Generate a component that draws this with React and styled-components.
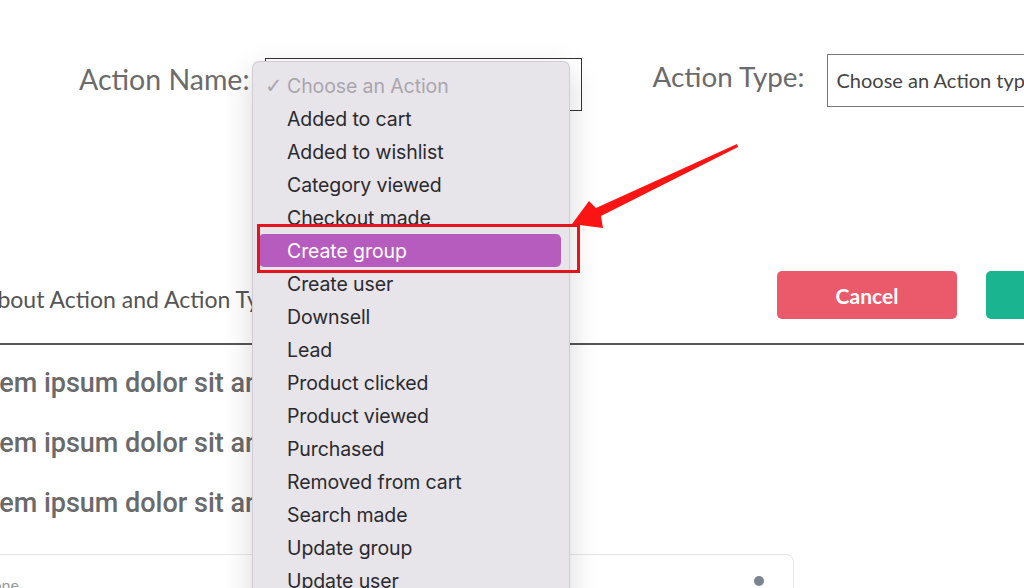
import React from 'react';
import styled, { createGlobalStyle } from 'styled-components';

const Global = createGlobalStyle`
  html, body { margin: 0; padding: 0; background: #fff; overflow: hidden; }
  #root { width: 1024px; height: 588px; }
  * { box-sizing: border-box; }
`;

const Page = styled.div`
  position: relative;
  width: 1024px;
  height: 588px;
  overflow: hidden;
  background: #fff;
  font-family: Lato, "Open Sans", sans-serif;
`;

const TopRow = styled.div`
  display: flex;
  align-items: flex-start;
  gap: 71px;
  padding: 54px 0 0 79px;
  width: 1400px;
`;

const Field = styled.div`
  display: flex;
  align-items: flex-start;
  gap: ${p => p.$gap}px;
  margin-top: ${p => p.$top || 0}px;
`;

const FieldLabel = styled.label`
  font-size: ${p => p.$size}px;
  color: #6b6b6b;
  line-height: ${p => p.$lh}px;
  white-space: nowrap;
`;

const SelectBox = styled.div`
  width: ${p => p.$w}px;
  height: 53px;
  border: 1px solid ${p => p.$border};
  background: #fff;
  padding-left: 8px;
  font-size: 20px;
  line-height: 51px;
  color: #444;
  white-space: nowrap;
  overflow: hidden;
`;

const ActionRow = styled.div`
  display: flex;
  align-items: center;
  margin-top: 160px;
  height: 48px;
  width: 1400px;
`;

const Description = styled.div`
  flex: 0 0 791px;
  margin-left: -14px;
  padding-top: 8px;
  font-size: 23px;
  color: #555;
  white-space: nowrap;
`;

const Buttons = styled.div`
  display: flex;
  gap: 29px;
`;

const Button = styled.button`
  width: 180px;
  height: 48px;
  border: none;
  border-radius: 5px;
  background: ${p => p.$bg};
  color: #fff;
  font-family: Lato, sans-serif;
  font-weight: 700;
  font-size: 21px;
`;

const Divider = styled.div`
  margin-top: 24px;
  height: 2px;
  background: #555;
  width: 100%;
`;

const LoremList = styled.div`
  margin: 8px 0 0 -40px;
`;

const LoremLine = styled.div`
  font-family: Roboto, sans-serif;
  font-weight: 500;
  font-size: 27px;
  line-height: 60px;
  color: #6a6a6a;
  white-space: nowrap;
`;

const Card = styled.div`
  margin: 21px 0 0 -40px;
  width: 834px;
  height: 80px;
  border: 1px solid #e6e6e6;
  border-radius: 8px;
  display: flex;
  align-items: flex-start;
  justify-content: space-between;
  padding: 20px 29px 0 13px;
`;

const CardText = styled.span`
  font-family: Lato, sans-serif;
  font-size: 16px;
  line-height: 20px;
  color: #9a9a9a;
`;

const Dot = styled.span`
  width: 10px;
  height: 10px;
  margin-top: 1px;
  border-radius: 50%;
  background: #7b8591;
`;

const Menu = styled.div`
  position: absolute;
  left: 252px;
  top: 61px;
  width: 318px;
  bottom: -40px;
  background: #e7e4ea;
  border: 1px solid rgba(0, 0, 0, 0.1);
  border-radius: 7px;
  box-shadow: 0 10px 30px rgba(0, 0, 0, 0.16);
  padding: 7px 8px 0 6px;
`;

const MenuItem = styled.div`
  display: flex;
  align-items: center;
  height: 33px;
  padding-left: 6px;
  border-radius: 5px;
  font-family: Inter, "Liberation Sans", sans-serif;
  font-size: 19.5px;
  letter-spacing: -0.1px;
  white-space: nowrap;
  color: ${p => (p.$active ? '#fff' : p.$muted ? '#a9a6ad' : '#2b2a2e')};
  background: ${p => (p.$active ? '#b65cbf' : 'transparent')};
`;

const Check = styled.span`
  width: 22px;
  flex: 0 0 22px;
  font-family: "DejaVu Sans", sans-serif;
  font-size: 21px;
  color: #a9a6ad;
`;

const RedBox = styled.div`
  position: absolute;
  left: 257px;
  top: 224px;
  width: 323px;
  height: 49px;
  border: 3px solid #e3141b;
`;

const ArrowSvg = styled.svg`
  position: absolute;
  left: 560px;
  top: 130px;
  width: 190px;
  height: 110px;
`;

const items = [
  'Choose an Action',
  'Added to cart',
  'Added to wishlist',
  'Category viewed',
  'Checkout made',
  'Create group',
  'Create user',
  'Downsell',
  'Lead',
  'Product clicked',
  'Product viewed',
  'Purchased',
  'Removed from cart',
  'Search made',
  'Update group',
  'Update user',
];

export default function App() {
  return (
    <>
      <Global />
      <Page>
        <TopRow>
          <Field $gap={15} $top={4}>
            <FieldLabel $size={28.5} $lh={42}>Action Name:</FieldLabel>
            <SelectBox $w={317} $border="#333" />
          </Field>
          <Field $gap={23}>
            <FieldLabel $size={27.8} $lh={45}>Action Type:</FieldLabel>
            <SelectBox $w={260} $border="#777">Choose an Action type</SelectBox>
          </Field>
        </TopRow>
        <ActionRow>
          <Description>about Action and Action Types</Description>
          <Buttons>
            <Button $bg="#ea5a6a">Cancel</Button>
            <Button $bg="#1bb491">Save</Button>
          </Buttons>
        </ActionRow>
        <Divider />
        <LoremList>
          <LoremLine>Lorem ipsum dolor sit amet</LoremLine>
          <LoremLine>Lorem ipsum dolor sit amet</LoremLine>
          <LoremLine>Lorem ipsum dolor sit amet</LoremLine>
        </LoremList>
        <Card>
          <CardText>Phone</CardText>
          <Dot />
        </Card>

        <Menu>
          {items.map((it, i) => (
            <MenuItem key={it} $muted={i === 0} $active={i === 5}>
              <Check>{i === 0 ? '✓' : ''}</Check>
              {it}
            </MenuItem>
          ))}
        </Menu>
        <RedBox />
        <ArrowSvg viewBox="0 0 190 110">
          <polygon
            points="177,14 178,17 41,86 43,98 12,94 29,71 36,78"
            fill="#fb1414"
          />
        </ArrowSvg>
      </Page>
    </>
  );
}
